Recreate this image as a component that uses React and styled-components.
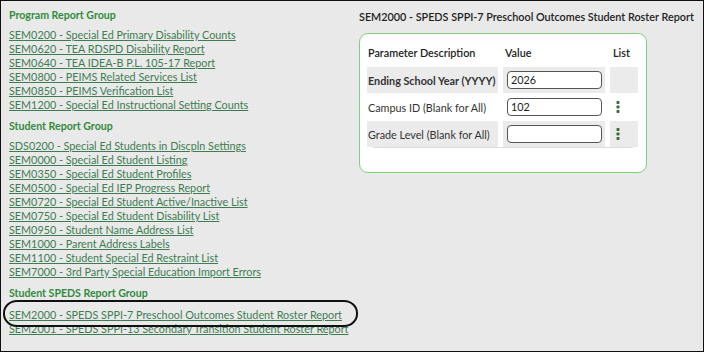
import React from "react";
import styled, { createGlobalStyle } from "styled-components";

const Global = createGlobalStyle`
  html, body { margin: 0; padding: 0; background: #fff; }
  * { box-sizing: border-box; }
`;

const Frame = styled.div`
  width: 704px;
  height: 352px;
  border: 1px solid #111;
  background: #e9e9e9;
  font-family: Lato, "Open Sans", sans-serif;
  display: flex;
  overflow: hidden;
  position: relative;
`;

const Left = styled.div`
  width: 350px;
  padding: 7px 0 0 8px;
  display: flex;
  flex-direction: column;
  position: relative;
`;

const GroupTitle = styled.div`
  color: #2f8c3c;
  font-weight: 700;
  font-size: 10.6px;
  line-height: 14px;
  margin-bottom: ${(p) => p.$gap || 6}px;
  margin-top: ${(p) => p.$top || 0}px;
`;

const Link = styled.a`
  display: block;
  color: #3d7d52;
  text-decoration: underline;
  font-size: 10.8px;
  line-height: 14px;
  white-space: nowrap;
`;

const Oval = styled.div`
  position: absolute;
  left: 2px;
  top: 299px;
  width: 355px;
  height: 27px;
  border: 2.5px solid #111;
  border-radius: 14px / 13px;
  pointer-events: none;
`;

const Right = styled.div`
  flex: 1;
  padding: 9px 0 0 8px;
`;

const ReportTitle = styled.div`
  color: #222;
  font-weight: 600;
  font-size: 10.8px;
  line-height: 14px;
  white-space: nowrap;
`;

const Card = styled.div`
  margin-top: 9px;
  width: 288px;
  height: 140px;
  background: #fff;
  border: 1.5px solid #7dd07f;
  border-radius: 9px;
  padding: 5px 7px 0 7px;
`;

const Grid = styled.div`
  display: grid;
  grid-template-columns: 131px 102px 28px;
  column-gap: 5px;
  row-gap: 1px;
`;

const Head = styled.div`
  font-size: 10.8px;
  font-weight: 600;
  color: #222;
  height: 27px;
  padding-left: ${(p) => p.$pl || 1}px;
  display: flex;
  align-items: center;
`;

const Cell = styled.div`
  height: 26px;
  background: ${(p) => (p.$shade ? "#ebebeb" : "#fff")};
  display: flex;
  align-items: center;
  padding-left: ${(p) => p.$pl || 1}px;
  font-size: 10.8px;
  font-weight: ${(p) => (p.$bold ? 700 : 400)};
  color: #333;
  white-space: nowrap;
`;

const Input = styled.div`
  width: 95px;
  height: 18px;
  border: 1px solid #555;
  border-radius: 4px;
  font-size: 10.8px;
  color: #222;
  padding-left: 3px;
  line-height: 16px;
  background: #fff;
`;

const BottomLine = styled.div`
  height: 1px;
  background: #d8dee6;
  margin: 0 6px;
`;

const Kebab = () => (
  <svg width="4" height="12" viewBox="0 0 4 12">
    <rect x="0.5" y="0" width="3" height="3" rx="0.8" fill="#3a6b40" />
    <rect x="0.5" y="4.5" width="3" height="3" rx="0.8" fill="#3a6b40" />
    <rect x="0.5" y="9" width="3" height="3" rx="0.8" fill="#3a6b40" />
  </svg>
);

const program = [
  "SEM0200 - Special Ed Primary Disability Counts",
  "SEM0620 - TEA RDSPD Disability Report",
  "SEM0640 - TEA IDEA-B P.L. 105-17 Report",
  "SEM0800 - PEIMS Related Services List",
  "SEM0850 - PEIMS Verification List",
  "SEM1200 - Special Ed Instructional Setting Counts",
];

const student = [
  "SDS0200 - Special Ed Students in Discpln Settings",
  "SEM0000 - Special Ed Student Listing",
  "SEM0350 - Special Ed Student Profiles",
  "SEM0500 - Special Ed IEP Progress Report",
  "SEM0720 - Special Ed Student Active/Inactive List",
  "SEM0750 - Special Ed Student Disability List",
  "SEM0950 - Student Name Address List",
  "SEM1000 - Parent Address Labels",
  "SEM1100 - Student Special Ed Restraint List",
  "SEM7000 - 3rd Party Special Education Import Errors",
];

const speds = [
  "SEM2000 - SPEDS SPPI-7 Preschool Outcomes Student Roster Report",
  "SEM2001 - SPEDS SPPI-13 Secondary Transition Student Roster Report",
];

const rows = [
  { label: "Ending School Year (YYYY)", value: "2026", bold: true, shade: true, list: false },
  { label: "Campus ID (Blank for All)", value: "102", shade: false, list: true },
  { label: "Grade Level (Blank for All)", value: "", shade: true, list: true },
];

export default function App() {
  return (
    <>
      <Global />
      <Frame>
        <Left>
          <GroupTitle $gap={6}>Program Report Group</GroupTitle>
          {program.map((t) => (
            <Link key={t}>{t}</Link>
          ))}
          <GroupTitle $top={7} $gap={6}>Student Report Group</GroupTitle>
          {student.map((t) => (
            <Link key={t}>{t}</Link>
          ))}
          <GroupTitle $top={7} $gap={8}>Student SPEDS Report Group</GroupTitle>
          {speds.map((t) => (
            <Link key={t}>{t}</Link>
          ))}
          <Oval />
        </Left>
        <Right>
          <ReportTitle>SEM2000 - SPEDS SPPI-7 Preschool Outcomes Student Roster Report</ReportTitle>
          <Card>
            <Grid>
              <Head>Parameter Description</Head>
              <Head $pl={2}>Value</Head>
              <Head $pl={3}>List</Head>
              {rows.map((r) => (
                <React.Fragment key={r.label}>
                  <Cell $shade={r.shade} $bold={r.bold}>{r.label}</Cell>
                  <Cell $shade={r.shade} $pl={4}>
                    <Input>{r.value}</Input>
                  </Cell>
                  <Cell $shade={r.shade} $pl={6}>
                    {r.list && <Kebab />}
                  </Cell>
                </React.Fragment>
              ))}
            </Grid>
            <BottomLine />
          </Card>
        </Right>
      </Frame>
    </>
  );
}
